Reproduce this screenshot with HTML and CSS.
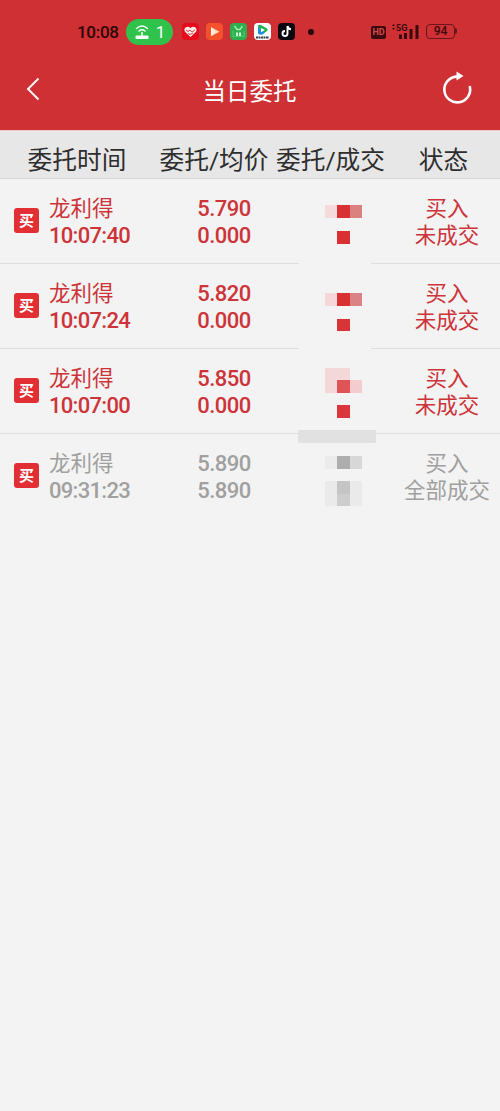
FILE: index.html
```html
<!DOCTYPE html>
<html lang="zh-CN">
<head>
  <meta charset="UTF-8" />
  <meta name="viewport" content="width=device-width, initial-scale=1" />
  <title>当日委托</title>
  <link rel="stylesheet" href="styles.css">
</head>
<body>

  <header class="top">
    <div class="statusbar">
      <span class="clock">10:08</span>
      <span class="hotspot">
        <svg width="16" height="16" viewBox="0 0 16 16" fill="none" stroke="#fff" stroke-width="1.5" stroke-linecap="round">
          <path d="M2.500 4.500Q8-.5 13.500 4.500M5 7Q8 4.500 11 7M8 8.500v3"/>
          <rect x="1.500" y="11.500" width="13" height="3.500" rx="1" fill="#fff" stroke="none"/>
        </svg>
        1
      </span>
      <div class="apps">
        <svg width="17" height="17" viewBox="0 0 17 17">
          <rect width="17" height="17" rx="4" fill="#e50b1d"/>
          <path d="M8.500 14L3 8.700C1 6 4.500 1.700 8.500 5c4-3.300 7.500 1 5.500 3.700z" fill="#fbe9e4"/>
          <path d="M4 7l2 1.500 2-1.500 2 2 3-2M6 10.500l2 1 3-1.500" fill="none" stroke="#d9404a" stroke-width="1"/>
        </svg>
        <svg width="17" height="17" viewBox="0 0 17 17">
          <rect width="17" height="17" rx="4" fill="#f4512c"/>
          <path d="M5 4l8.500 4.700L5 13.300z" fill="#ffd9b8"/>
          <path d="M5 4l4 4.700-4 4.600z" fill="#fff3e4"/>
        </svg>
        <svg width="17" height="17" viewBox="0 0 17 17">
          <rect width="17" height="17" rx="4" fill="#2fae50"/>
          <path d="M4.500 3l2.500 3.500h3L12.500 3" fill="none" stroke="#a6efb2" stroke-width="1.300"/>
          <path d="M3 8v5.500h11V8" fill="none" stroke="#4cc968" stroke-width="1.200"/>
          <path d="M7 9.500v3.500M10 9.500v3.500" stroke="#e4ffe8" stroke-width="1.800"/>
        </svg>
        <svg width="17" height="17" viewBox="0 0 17 17">
          <rect width="17" height="17" rx="4" fill="#fff"/>
          <path d="M4 2.500Q5 1.200 7 2l6 3.500q1.500 1.300 0 2.500l-5 3.500z" fill="#21b04b"/>
          <path d="M4 2.500v8q1.500 2 4 1l3-2-5-3z" fill="#1b8ee0"/>
          <path d="M7 5l4 2-4 2.300z" fill="#fff"/>
          <path d="M2 14.500h13" stroke="#35414f" stroke-width="2" stroke-dasharray="2 .5"/>
        </svg>
        <svg width="17" height="17" viewBox="0 0 17 17">
          <rect width="17" height="17" rx="4" fill="#0b0710"/>
          <path d="M9.500 3v7.500a2.500 2.500 0 1 1-2.500-2.500M9.500 3q.5 3 3.500 3.300" fill="none" stroke="#fff" stroke-width="1.900"/>
        </svg>
      </div>
      <span class="dot"></span>
      <div class="phone">
        <span class="hd">HD</span>
        <svg class="signal" width="29" height="17" viewBox="0 0 29 17" fill="#3a0a0e">
          <path d="M1 3l1.500-2L4 3zM1 5l1.500 2L4 5z"/>
          <text x="5" y="8">5G</text>
          <path d="M8 11.500h3V16H8zM13 10h3v6h-3zM18.500 6h3v10h-3zM24.500 2h3v14h-3z"/>
        </svg>
        <span class="battery">94</span>
      </div>
    </div>
    <div class="nav">
      <svg class="back" width="14" height="24" viewBox="0 0 14 24" fill="none" stroke="#fff" stroke-width="1.900">
        <path d="M12.500 1.500L2 12l10.500 10.500"/>
      </svg>
      <h1>当日委托</h1>
      <svg class="refresh" width="32" height="34" viewBox="0 0 32 34">
        <path d="M18 5.600H16A12.900 12.900 0 1 0 28.900 16" fill="none" stroke="#fff" stroke-width="2.600" stroke-linecap="round"/>
        <path d="M15.500 .5L22.500 5l-7 4.500z" fill="#fff"/>
      </svg>
    </div>
  </header>

  <main class="orders">
    <div class="head">
      <span>委托时间</span>
      <span>委托/均价</span>
      <span>委托/成交</span>
      <span>状态</span>
    </div>

    <div class="row">
      <span class="tag">买</span>
      <div class="stock"><p>龙利得</p><p class="num">10:07:40</p></div>
      <div class="price"><p class="num">5.790</p><p class="num">0.000</p></div>
      <svg class="mask" width="72" height="85">
        <rect class="patch" width="72" height="85"/>
        <rect x="26" y="26" width="12" height="13" fill="#f5dadb"/>
        <rect x="38" y="26" width="13" height="13" fill="#d93033"/>
        <rect x="51" y="26" width="12" height="13" fill="#db8280"/>
        <rect x="38" y="52" width="13" height="13" fill="#d93033"/>
      </svg>
      <div class="state"><p>买入</p><p>未成交</p></div>
    </div>

    <div class="row">
      <span class="tag">买</span>
      <div class="stock"><p>龙利得</p><p class="num">10:07:24</p></div>
      <div class="price"><p class="num">5.820</p><p class="num">0.000</p></div>
      <svg class="mask" width="72" height="85">
        <rect class="patch" width="72" height="85"/>
        <rect x="26" y="29" width="12" height="13" fill="#f5d7d9"/>
        <rect x="38" y="29" width="13" height="13" fill="#d93033"/>
        <rect x="51" y="29" width="12" height="13" fill="#da8286"/>
        <rect x="38" y="55" width="13" height="12" fill="#d63437"/>
      </svg>
      <div class="state"><p>买入</p><p>未成交</p></div>
    </div>

    <div class="row">
      <span class="tag">买</span>
      <div class="stock"><p>龙利得</p><p class="num">10:07:00</p></div>
      <div class="price"><p class="num">5.850</p><p class="num">0.000</p></div>
      <svg class="mask" width="72" height="85">
        <rect x="26" y="19" width="25" height="25" fill="#f3d7d9"/>
        <rect x="38" y="31" width="13" height="13" fill="#de5457"/>
        <rect x="51" y="31" width="12" height="13" fill="#f2cccf"/>
        <rect x="38" y="56" width="13" height="13" fill="#d9373b"/>
      </svg>
      <div class="state"><p>买入</p><p>未成交</p></div>
    </div>

    <div class="row done">
      <span class="tag">买</span>
      <div class="stock"><p>龙利得</p><p class="num">09:31:23</p></div>
      <div class="price"><p class="num">5.890</p><p class="num">5.890</p></div>
      <svg class="mask" width="72" height="85">
        <rect x="-1" y="-4" width="78" height="13" rx="1" fill="#e1e1e1"/>
        <rect x="26" y="22" width="12" height="13" fill="#ebebeb"/>
        <rect x="38" y="22" width="13" height="13" fill="#adadad"/>
        <rect x="51" y="22" width="12" height="13" fill="#d7d7d7"/>
        <rect x="26" y="47" width="37" height="25" fill="#eaeaea"/>
        <rect x="38" y="47" width="13" height="13" fill="#c5c5c5"/>
        <rect x="38" y="60" width="13" height="12" fill="#cdcdcd"/>
      </svg>
      <div class="state"><p>买入</p><p>全部成交</p></div>
    </div>
  </main>

</body>
</html>
```
FILE: styles.css
```css
:root {
  --red: #ce3033;
  --text-red: #cd3439;
  --bg: #f3f3f3;
  --ink: #3a0a0e;
}

* {
  box-sizing: border-box;
}

body {
  margin: 0;
  min-height: 1111px;
  background: var(--bg);
  font-family: Roboto, "Noto Sans CJK SC", sans-serif;
}

p, h1 {
  margin: 0;
  font-weight: 400;
}

.top {
  height: 131px;
  background: var(--red);
  border-bottom: 1px solid #f0c9c9;
}

.statusbar {
  display: flex;
  align-items: center;
  height: 63px;
  padding-left: 77px;
}

.clock {
  width: 49px;
  padding-top: 1px;
  font-size: 17px;
  font-weight: 500;
  letter-spacing: -0.3px;
  color: #2b0508;
}

.hotspot {
  display: flex;
  align-items: center;
  justify-content: center;
  gap: 6px;
  width: 47px;
  height: 26px;
  border-radius: 13px;
  background: #30c34c;
  color: #fff;
  font-size: 17px;
}

.apps {
  display: flex;
  gap: 7px;
  margin-left: 9px;
}

.dot {
  width: 6px;
  height: 6px;
  margin-left: 13px;
  border-radius: 50%;
  background: #25060a;
}

.phone {
  display: flex;
  align-items: center;
  margin-left: 57px;
}

.hd {
  width: 15px;
  height: 13px;
  margin-top: 1px;
  border-radius: 2px;
  background: var(--ink);
  color: #d8494c;
  font-size: 9px;
  font-weight: 700;
  line-height: 13px;
  text-align: center;
}

.signal {
  margin: 0 6px 0 5px;
  font-size: 9px;
  font-weight: 700;
}

.battery {
  position: relative;
  width: 29px;
  height: 15px;
  border: 1.5px solid #6b161a;
  border-radius: 4px;
  color: var(--ink);
  font-size: 12px;
  font-weight: 500;
  line-height: 13px;
  text-align: center;
}

.battery::after {
  content: "";
  position: absolute;
  top: 3px;
  right: -3px;
  width: 2px;
  height: 6px;
  border-radius: 0 2px 2px 0;
  background: #6b161a;
}

.nav {
  display: flex;
  align-items: center;
  justify-content: space-between;
  height: 52px;
  padding: 0 27px 0 26px;
}

.nav h1 {
  margin: 6px 0 0 18px;
  color: #fff;
  font-size: 23.5px;
  line-height: 34px;
}

.refresh {
  margin-top: -2px;
}

.head, .row {
  display: grid;
  grid-template-columns: 154px 120px 113px 113px;
}

.head {
  height: 48px;
  background: #e7e7e7;
  border-bottom: 1px solid #d6d6d6;
  color: #2e2e2e;
  font-size: 24.7px;
  line-height: 60px;
  text-align: center;
  white-space: nowrap;
}

.row {
  grid-template-columns: 14px 35px 125px 100px 25px 72px 23px 106px;
  height: 85px;
  border-bottom: 1px solid #dedede;
  color: var(--text-red);
  font-size: 21.5px;
  line-height: 26.5px;
}

.row.done {
  border-bottom: 0;
  color: #a0a0a0;
}

.tag {
  grid-column: 2;
  width: 25px;
  height: 25px;
  margin-top: 29px;
  border-radius: 3px;
  background: #e22f33;
  color: #fff;
  font-size: 15px;
  font-weight: 700;
  line-height: 26px;
  text-align: center;
}

.stock, .price, .state {
  padding-top: 17px;
}

.num {
  font-size: 22px;
  font-weight: 500;
  letter-spacing: -0.7px;
}

.price {
  text-align: center;
}

.price .num {
  letter-spacing: -0.5px;
}

.mask {
  grid-column: 6;
  overflow: visible;
}

.patch {
  fill: var(--bg);
}

.state {
  grid-column: 8;
  text-align: center;
  white-space: nowrap;
}
```
